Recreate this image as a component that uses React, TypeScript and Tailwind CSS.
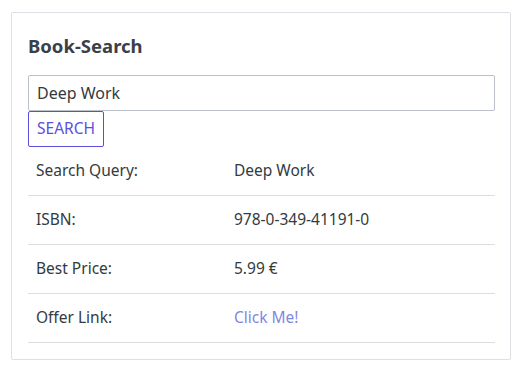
export default function App() {
  const rows = [
    { label: "Search Query:", value: "Deep Work" },
    { label: "ISBN:", value: "978-0-349-41191-0" },
    { label: "Best Price:", value: "5.99 €" },
  ];

  return (
    <div className="bg-white w-[520px] h-[370px] pt-3 pl-[11px] font-['Noto_Sans',sans-serif] text-[#343a40]">
      <div className="w-[500px] h-[348px] border border-[#dee0e6] rounded-[2px] px-4 pt-[21px]">
        <h1 className="text-[18.5px] font-bold leading-[24px] text-[#3a3f4a]">Book-Search</h1>

        <div className="mt-[17px]">
          <input
            type="text"
            defaultValue="Deep Work"
            className="block w-[467px] h-[36px] border border-[#bcc0cb] rounded-[2px] px-2 text-[16px] text-[#343a40] outline-none"
          />
          <button
            type="button"
            className="block h-[36px] px-2 border border-[#5b4fe0] rounded-[2px] text-[15.5px] text-[#5b4fe0]"
          >
            SEARCH
          </button>
        </div>

        <table className="w-[467px] -mt-[1px] text-[15.5px]">
          <tbody>
            {rows.map((r) => (
              <tr key={r.label} className="border-b border-[#dcdde3] h-[49px]">
                <td className="pl-2 w-[206px]">{r.label}</td>
                <td>{r.value}</td>
              </tr>
            ))}
            <tr className="border-b border-[#dcdde3] h-[49px]">
              <td className="pl-2">Offer Link:</td>
              <td>
                <a href="#" className="text-[#7f87e2]">Click Me!</a>
              </td>
            </tr>
          </tbody>
        </table>
      </div>
    </div>
  );
}
